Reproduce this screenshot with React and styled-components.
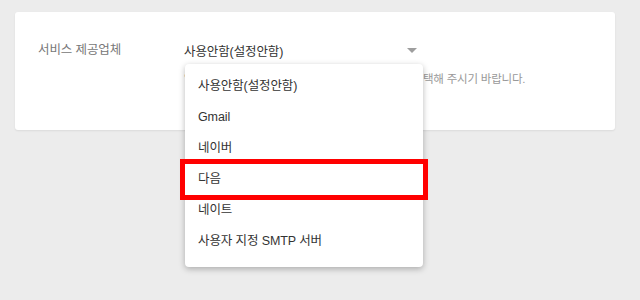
import styled, { createGlobalStyle } from 'styled-components';

const GlobalStyle = createGlobalStyle`
	body {
		margin: 0;
		background: #ececec;
		font-family: "Liberation Sans", "Noto Sans CJK KR", sans-serif;
	}
`;

const providers = [
	'사용안함(설정안함)',
	'Gmail',
	'네이버',
	'다음',
	'네이트',
	'사용자 지정 SMTP 서버',
];

const Page = styled.div`
	padding: 12px 25px 0 15px;
	width: 640px;
	height: 300px;
	box-sizing: border-box;
`;

const Card = styled.div`
	background: #fff;
	border-radius: 3px;
	box-shadow: 0 1px 2px rgba(0, 0, 0, 0.08);
	height: 118px;
	box-sizing: border-box;
	padding: 28px 23px;
	display: grid;
	grid-template-columns: 146px 239px;
	align-items: start;
`;

const Label = styled.div`
	font-size: 12.5px;
	letter-spacing: -0.1px;
	color: #777;
	line-height: 20px;
`;

const Field = styled.div`
	position: relative;
`;

const Trigger = styled.div`
	display: flex;
	align-items: center;
	justify-content: space-between;
	height: 20px;
	padding-right: 6px;
	font-size: 12.5px;
	letter-spacing: -0.1px;
	color: #333;
`;

const Arrow = styled.span`
	width: 0;
	height: 0;
	border-left: 5px solid transparent;
	border-right: 5px solid transparent;
	border-top: 5px solid #9e9e9e;
`;

const Helper = styled.div`
	margin-top: 11px;
	font-size: 11.5px;
	letter-spacing: -0.2px;
	line-height: 16px;
	color: #999;
	white-space: nowrap;
`;

const Menu = styled.ul`
	position: absolute;
	top: 24px;
	left: 1px;
	width: 238px;
	margin: 0;
	padding: 7px 0 10px;
	list-style: none;
	background: #fff;
	border-radius: 4px;
	box-shadow: 0 2px 6px rgba(0, 0, 0, 0.28);
	z-index: 2;
`;

const Item = styled.li`
	height: 31px;
	line-height: 31px;
	padding-left: 13px;
	font-size: 12.5px;
	letter-spacing: -0.1px;
	color: #333;
	outline: ${({ $marked }) => ($marked ? '5px solid #ff0000' : 'none')};
`;

export default function App() {
	return (
		<Page>
			<GlobalStyle />
			<Card>
				<Label>서비스 제공업체</Label>
				<Field>
					<Trigger>
						<span>사용안함(설정안함)</span>
						<Arrow />
					</Trigger>
					<Helper>알림 메일을 발송할 때 사용할 서비스 제공업체를 선택해 주시기 바랍니다.</Helper>
					<Menu>
						{providers.map((name) => (
							<Item key={name} $marked={name === '다음'}>
								{name}
							</Item>
						))}
					</Menu>
				</Field>
			</Card>
		</Page>
	);
}
